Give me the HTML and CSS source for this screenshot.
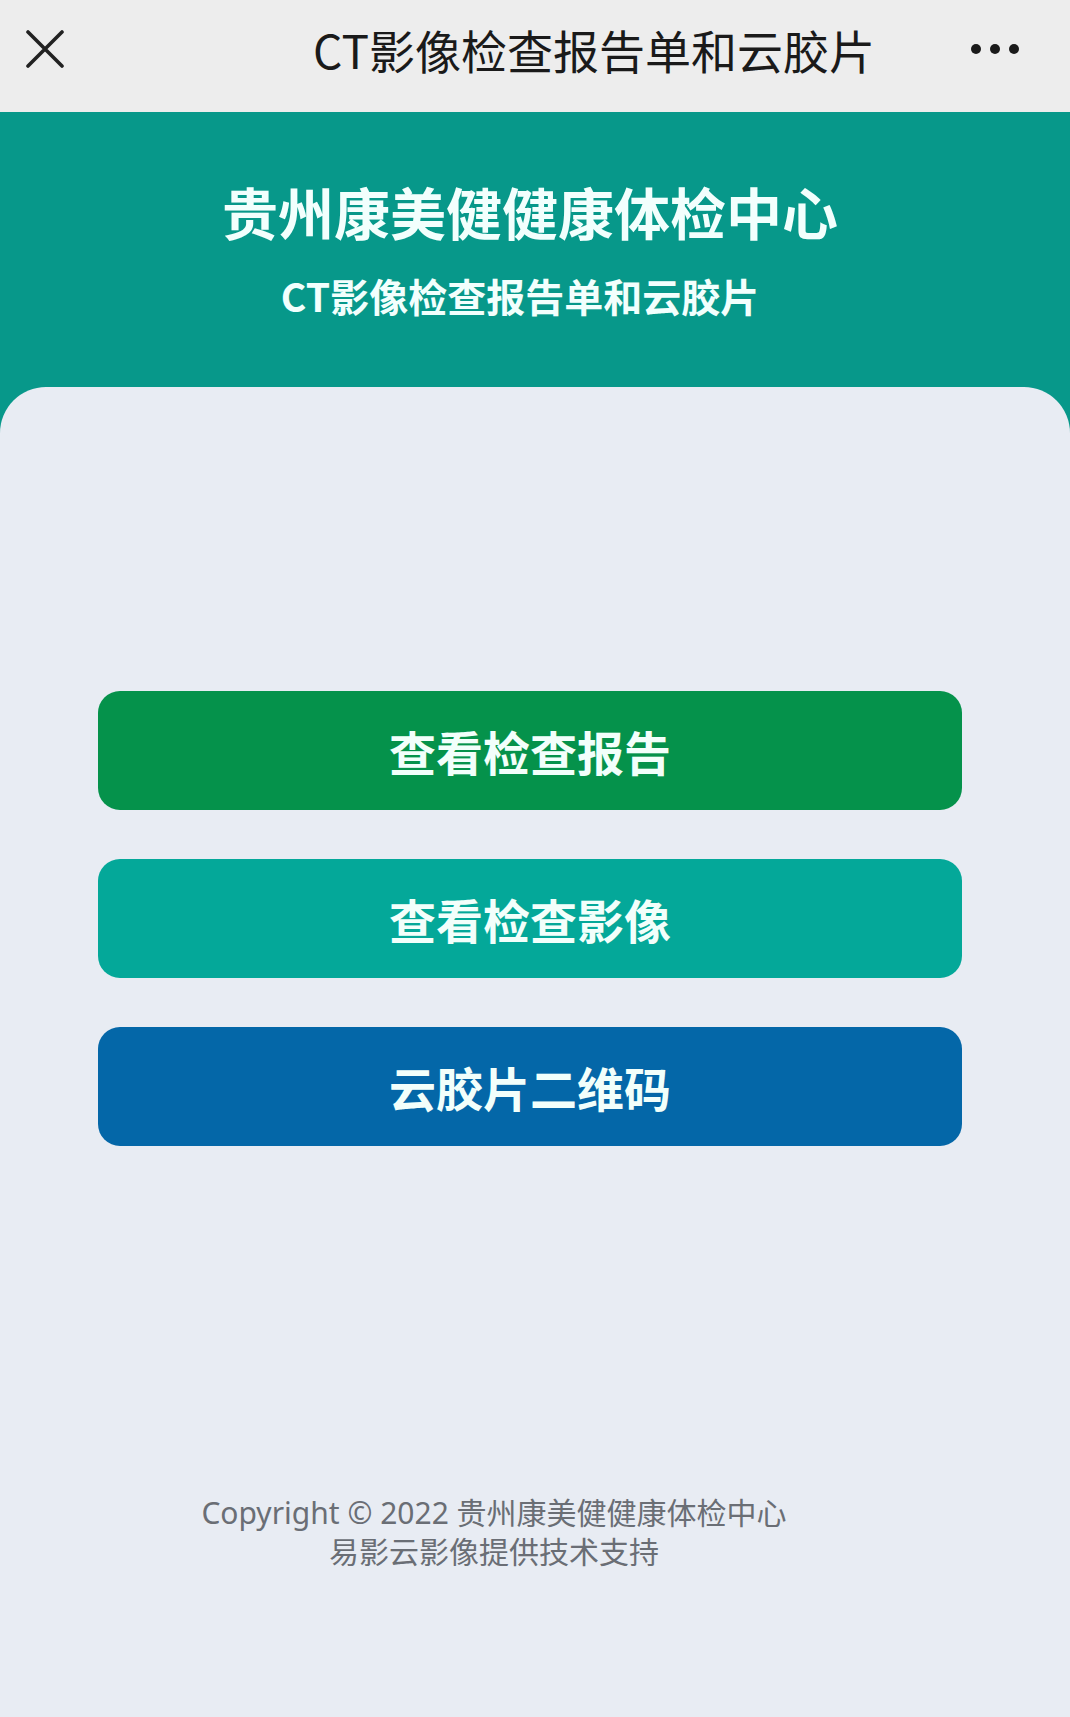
FILE: index.html
```html
<!DOCTYPE html>
<html lang="zh-CN">
<head>
    <meta charset="UTF-8">
    <meta name="viewport" content="width=device-width, initial-scale=1.0">
    <title>CT影像检查报告单和云胶片</title>
    <link rel="stylesheet" href="styles.css">
</head>
<body>

<div class="page">
    <!-- barra do topo -->
    <div class="topbar">
        <svg class="close-icon" viewBox="0 0 38 38" width="38" height="38">
            <path d="M2 2 L36 36 M36 2 L2 36" stroke="#222" stroke-width="3.6" stroke-linecap="round" fill="none"/>
        </svg>
        <div class="topbar-title">CT影像检查报告单和云胶片</div>
        <div class="more">
            <span class="dot"></span><span class="dot"></span><span class="dot"></span>
        </div>
    </div>

    <div class="hero">
        <div class="hero-title">贵州康美健健康体检中心</div>
        <div class="hero-sub">CT影像检查报告单和云胶片</div>
    </div>

    <div class="card">
        <div class="buttons">
            <button class="btn btn-report">查看检查报告</button>
            <button class="btn btn-image">查看检查影像</button>
            <button class="btn btn-qr">云胶片二维码</button>
        </div>

        <div class="footer">
            Copyright © 2022 贵州康美健健康体检中心<br>
            易影云影像提供技术支持
        </div>
    </div>
</div>

</body>
</html>
```

FILE: styles.css
```css
body {
    margin: 0;
    padding: 0;
    background: #e8ecf3;
    font-family: "Noto Sans", "Noto Sans CJK SC", sans-serif;
}

.page {
    min-height: 1717px;
    display: flex;
    flex-direction: column;
    background: #07988a;
}

.topbar {
    height: 112px;
    background: #ededed;
    display: flex;
    align-items: center;
}

.close-icon {
    margin-left: 26px;
    margin-top: -14px;
    flex-shrink: 0;
}

.topbar-title {
    margin-left: 249px;
    font-family: "Noto Sans CJK SC", sans-serif;
    font-size: 46px;
    color: #1a1a1a;
    white-space: nowrap;
    line-height: 1;
    margin-top: -14px;
}

.more {
    margin-left: auto;
    margin-right: 51px;
    display: flex;
    gap: 9px;
    margin-top: -14px;
}

.dot {
    width: 10px;
    height: 10px;
    border-radius: 50%;
    background: #1a1a1a;
}

.hero {
    padding: 65px 0 69px;
    text-align: center;
    color: #f2fffd;
    font-family: "Noto Sans CJK SC", sans-serif;
    font-weight: bold;
}

.hero-title {
    font-size: 56px;
    line-height: 67px;
    padding-right: 10px;
}

.hero-sub {
    font-size: 39px;
    line-height: 46px;
    margin-top: 28px;
    padding-right: 30px;
}

.card {
    flex: 1;
    background: #e8ecf3;
    border-radius: 46px 46px 0 0;
    display: flex;
    flex-direction: column;
}

.buttons {
    margin: 304px 108px 0 98px;
    display: flex;
    flex-direction: column;
    gap: 49px;
}

.btn {
    height: 119px;
    border: none;
    border-radius: 22px;
    color: #f2fffb;
    font-family: "Noto Sans CJK SC", sans-serif;
    font-weight: bold;
    font-size: 47px;
    cursor: pointer;
    padding: 0;
}

.btn-report {
    background: #05924b;
}

.btn-image {
    background: #04a899;
}

.btn-qr {
    background: #0467a8;
}

.footer {
    margin-top: 347px;
    padding-right: 82px;
    text-align: center;
    font-size: 30px;
    line-height: 39px;
    color: #6a6e75;
}
```
